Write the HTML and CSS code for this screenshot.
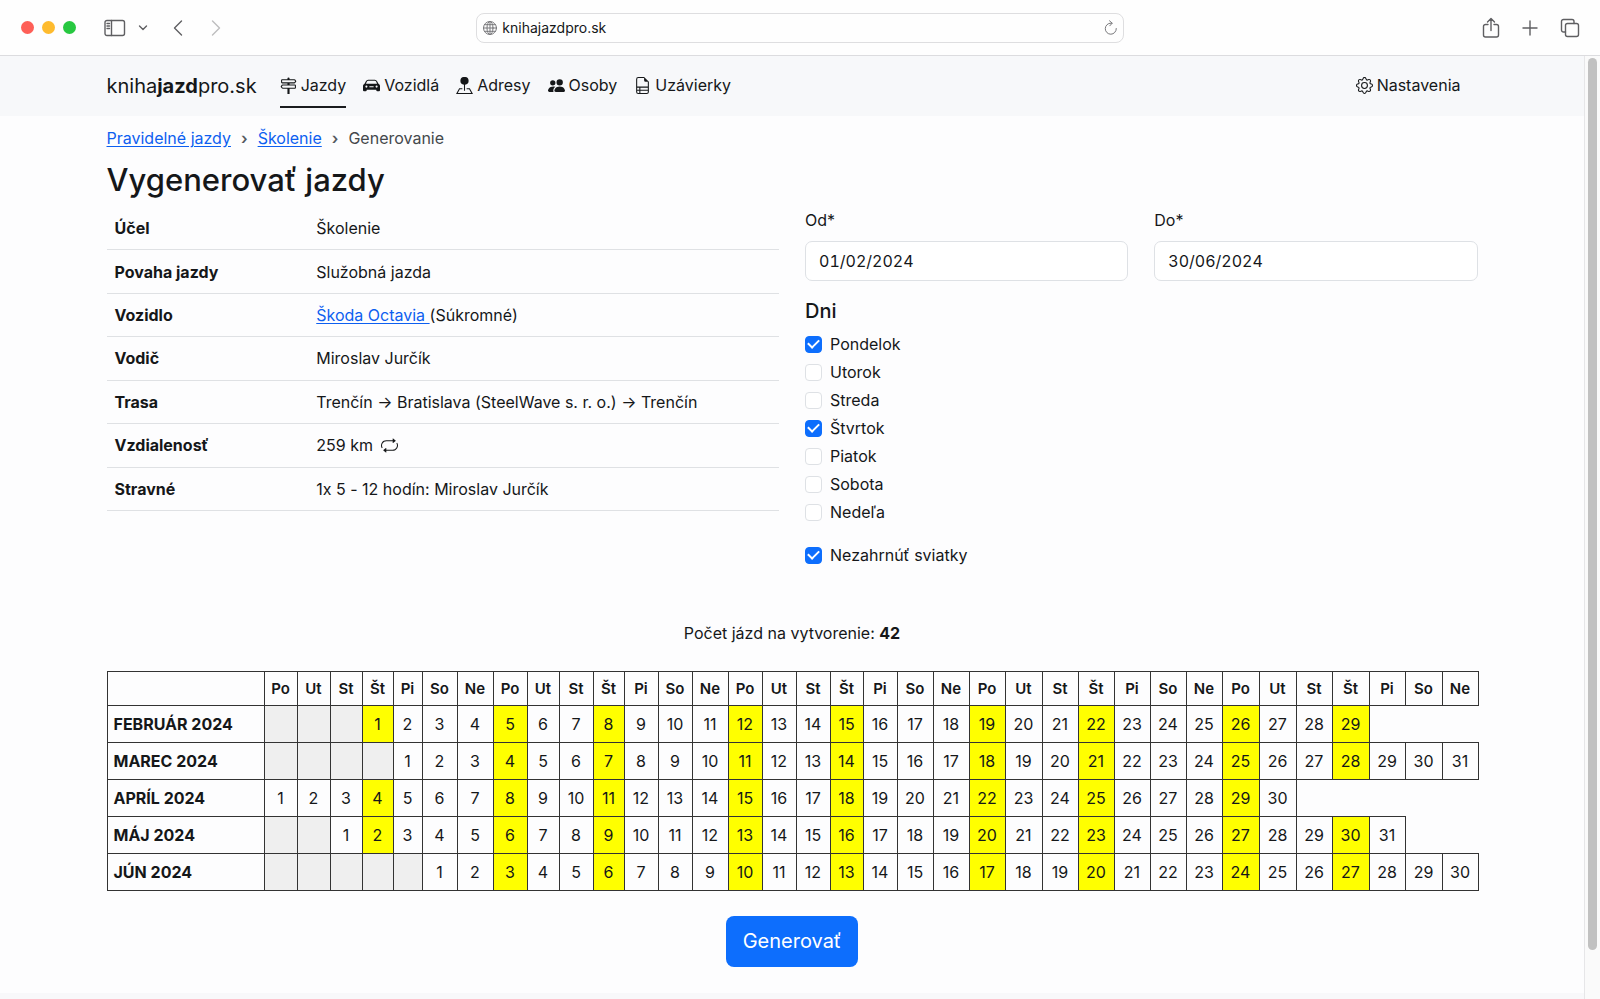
FILE: index.html
```html
<!DOCTYPE html>
<html lang="sk">
<head>
<meta charset="utf-8">
<title>Vygenerovať jazdy</title>
<link rel="stylesheet" href="styles.css">
</head>
<body>
<header class="toolbar">
  <div class="toolbar-side">
    <div class="lights"><span class="light red"></span><span class="light amber"></span><span class="light green"></span></div>
    <button class="tool" aria-label="Bočný panel"><svg width="22" height="18" viewBox="0 0 22 18"><rect x="1" y="1.5" width="19.5" height="15" rx="2" /><path d="M7.500 1.500v15M3 4.500h2.500M3 7h2.500M3 9.500h2.500"/></svg></button>
    <button class="tool chevron" aria-label="Skupiny kariet"><svg width="10" height="8" viewBox="0 0 10 8"><path d="M1.500 2l3.500 3.500L8.500 2"/></svg></button>
    <button class="tool back" aria-label="Späť"><svg width="12" height="18" viewBox="0 0 12 18"><path d="M9.500 2L2.500 9l7 7"/></svg></button>
    <button class="tool forward" aria-label="Dopredu" disabled><svg width="12" height="18" viewBox="0 0 12 18"><path d="M2.500 2l7 7-7 7"/></svg></button>
  </div>
  <div class="address">
    <svg width="16" height="16" viewBox="0 0 16 16"><circle cx="8" cy="8" r="6.500"/><ellipse cx="8" cy="8" rx="3" ry="6.500"/><path d="M8 1.500v13M1.500 8h13M2.500 4.700h11M2.500 11.300h11"/></svg>
    <input type="text" aria-label="Adresa" value="knihajazdpro.sk">
    <button class="tool" aria-label="Obnoviť"><svg width="14" height="16" viewBox="0 0 14 16"><path d="M12.300 8.500A5.500 5.500 0 1 1 7 3.200h1M5.500 .8L8.200 3.200 5.800 5.800"/></svg></button>
  </div>
  <div class="toolbar-side end">
    <button class="tool" aria-label="Zdieľať"><svg width="18" height="22" viewBox="0 0 18 22"><path d="M6 7.500H3.500a2 2 0 0 0-2 2V18a2 2 0 0 0 2 2h11a2 2 0 0 0 2-2V9.500a2 2 0 0 0-2-2H12M9 13.500V2M5.500 5L9 1.500 12.500 5"/></svg></button>
    <button class="tool" aria-label="Nová karta"><svg width="16" height="16" viewBox="0 0 16 16"><path d="M8 1v14M1 8h14"/></svg></button>
    <button class="tool" aria-label="Prehľad kariet"><svg width="20" height="20" viewBox="0 0 20 20"><path d="M5.500 14H3.500a2 2 0 0 1-2-2V3.500a2 2 0 0 1 2-2H12a2 2 0 0 1 2 2v2"/><rect x="5.500" y="5.500" width="13" height="13" rx="2"/></svg></button>
  </div>
</header>
<div class="viewport">
  <div class="page">
    <nav class="navbar">
      <div class="container nav-row">
        <a class="brand" href="#">kniha<b>jazd</b>pro.sk</a>
        <a class="nav-link active" href="#"><svg class="icon" viewBox="0 0 16 16"><path d="M7 1.414V2H2a1 1 0 0 0-1 1v2a1 1 0 0 0 1 1h5v1H2.500a1 1 0 0 0-.8.4L.725 8.700a.5.5 0 0 0 0 .6l.975 1.300a1 1 0 0 0 .8.4H7v5h2v-5h5a1 1 0 0 0 1-1V8a1 1 0 0 0-1-1H9V6h4.500a1 1 0 0 0 .8-.4l.975-1.300a.5.5 0 0 0 0-.6L14.300 2.400a1 1 0 0 0-.8-.4H9v-.586a1 1 0 0 0-2 0M13.500 3l.75 1-.75 1H2V3zm.5 5v2H2.500l-.75-1 .75-1z"/></svg>Jazdy</a>
        <a class="nav-link" href="#"><svg class="icon" viewBox="0 0 16 16"><path fill-rule="evenodd" d="M4.900 2.500A2.500 2.500 0 0 0 2.700 3.900L1.600 6.100.8 6.800A2 2 0 0 0 0 8.300V12.500a1 1 0 0 0 1 1h1.500a1 1 0 0 0 1-1V12h9v.5a1 1 0 0 0 1 1H15a1 1 0 0 0 1-1V8.300a2 2 0 0 0-.8-1.500l-.8-.7-1.100-2.200A2.500 2.500 0 0 0 11.100 2.500zM4.900 3.500h6.200a1.300 1.300 0 0 1 1.200.8l.9 2.100H2.800l.9-2.100a1.300 1.300 0 0 1 1.200-.8M3.200 8a1 1 0 1 1 0 2 1 1 0 0 1 0-2m9.600 0a1 1 0 1 1 0 2 1 1 0 0 1 0-2M6 8.600h4v1H6z"/></svg>Vozidlá</a>
        <a class="nav-link" href="#"><svg class="icon" viewBox="0 0 16 16"><path fill-rule="evenodd" d="M8 0a3.600 3.600 0 0 1 .5 7.200V13h-1V7.200A3.600 3.600 0 0 1 8 0M3 10.500h3v1H3.600L1.700 15h12.600l-1.900-3.500H10v-1h3L16 16H0z"/></svg>Adresy</a>
        <a class="nav-link" href="#"><svg class="icon" viewBox="0 0 16 16"><path d="M7 14s-1 0-1-1 1-4 5-4 5 3 5 4-1 1-1 1zm4-6a3 3 0 1 0 0-6 3 3 0 0 0 0 6m-5.784 6A2.240 2.240 0 0 1 5 13c0-1.355.68-2.750 1.936-3.720A6.300 6.300 0 0 0 5 9c-4 0-5 3-5 4s1 1 1 1zM4.500 8a2.500 2.500 0 1 0 0-5 2.500 2.500 0 0 0 0 5"/></svg>Osoby</a>
        <a class="nav-link" href="#"><svg class="icon" viewBox="0 0 16 16"><path d="M14 14V4.500L9.500 0H4a2 2 0 0 0-2 2v12a2 2 0 0 0 2 2h8a2 2 0 0 0 2-2M9.500 3A1.500 1.500 0 0 0 11 4.500h2V9H3V2a1 1 0 0 1 1-1h5.500zM3 12v-2h2v2zm0 1h2v2H4a1 1 0 0 1-1-1zm3 2v-2h7v1a1 1 0 0 1-1 1zm7-3H6v-2h7z"/></svg>Uzávierky</a>
        <a class="nav-link settings" href="#"><svg class="icon" viewBox="0 0 16 16"><path d="M8 4.754a3.246 3.246 0 1 0 0 6.492 3.246 3.246 0 0 0 0-6.492M5.754 8a2.246 2.246 0 1 1 4.492 0 2.246 2.246 0 0 1-4.492 0"/><path d="M9.796 1.343c-.527-1.790-3.065-1.790-3.592 0l-.094.319a.873.873 0 0 1-1.255.52l-.292-.16c-1.640-.892-3.433.902-2.540 2.541l.159.292a.873.873 0 0 1-.52 1.255l-.319.094c-1.790.527-1.790 3.065 0 3.592l.319.094a.873.873 0 0 1 .52 1.255l-.16.292c-.892 1.640.901 3.434 2.541 2.540l.292-.159a.873.873 0 0 1 1.255.52l.094.319c.527 1.790 3.065 1.790 3.592 0l.094-.319a.873.873 0 0 1 1.255-.52l.292.16c1.640.893 3.434-.902 2.540-2.541l-.159-.292a.873.873 0 0 1 .52-1.255l.319-.094c1.790-.527 1.790-3.065 0-3.592l-.319-.094a.873.873 0 0 1-.52-1.255l.16-.292c.893-1.640-.902-3.433-2.541-2.540l-.292.159a.873.873 0 0 1-1.255-.52zm-2.633.283c.246-.835 1.428-.835 1.674 0l.094.319a1.873 1.873 0 0 0 2.693 1.115l.291-.16c.764-.415 1.600.42 1.184 1.185l-.159.292a1.873 1.873 0 0 0 1.116 2.692l.318.094c.835.246.835 1.428 0 1.674l-.319.094a1.873 1.873 0 0 0-1.115 2.693l.16.291c.415.764-.42 1.600-1.185 1.184l-.291-.159a1.873 1.873 0 0 0-2.693 1.116l-.094.318c-.246.835-1.428.835-1.674 0l-.094-.319a1.873 1.873 0 0 0-2.692-1.115l-.292.16c-.764.415-1.600-.42-1.184-1.185l.159-.291A1.873 1.873 0 0 0 1.945 8.930l-.319-.094c-.835-.246-.835-1.428 0-1.674l.319-.094A1.873 1.873 0 0 0 3.060 4.377l-.16-.292c-.415-.764.42-1.600 1.185-1.184l.292.159a1.873 1.873 0 0 0 2.692-1.115z"/></svg>Nastavenia</a>
      </div>
    </nav>
    <main class="container">
      <nav class="breadcrumb" aria-label="Navigácia">
        <a href="#">Pravidelné jazdy</a><span class="sep">›</span><a href="#">Školenie</a><span class="sep">›</span><span class="current">Generovanie</span>
      </nav>
      <h1>Vygenerovať jazdy</h1>
      <form>
        <div class="columns">
          <table class="details">
            <tbody>
              <tr><th scope="row">Účel</th><td>Školenie</td></tr>
              <tr><th scope="row">Povaha jazdy</th><td>Služobná jazda</td></tr>
              <tr><th scope="row">Vozidlo</th><td><a href="#">Škoda Octavia </a>(Súkromné)</td></tr>
              <tr><th scope="row">Vodič</th><td>Miroslav Jurčík</td></tr>
              <tr><th scope="row">Trasa</th><td>Trenčín → Bratislava (SteelWave s. r. o.) → Trenčín</td></tr>
              <tr><th scope="row">Vzdialenosť</th><td>259 km <svg class="icon repeat" viewBox="0 0 16 16"><path d="M11 5.466V4H5a4 4 0 0 0-3.584 5.777.5.5 0 1 1-.896.446A5 5 0 0 1 5 3h6V1.534a.25.25 0 0 1 .41-.192l2.360 1.966c.12.100.12.284 0 .384l-2.360 1.966a.25.25 0 0 1-.41-.192m3.810.086a.5.5 0 0 1 .67.225A5 5 0 0 1 11 13H5v1.466a.25.25 0 0 1-.41.192l-2.360-1.966a.25.25 0 0 1 0-.384l2.360-1.966a.25.25 0 0 1 .41.192V12h6a4 4 0 0 0 3.585-5.777.5.5 0 0 1 .225-.67z"/></svg></td></tr>
              <tr><th scope="row">Stravné</th><td>1x 5 - 12 hodín: Miroslav Jurčík</td></tr>
            </tbody>
          </table>
          <div class="options">
            <div class="dates">
              <div class="field"><label for="from">Od*</label><input id="from" type="text" value="01/02/2024"></div>
              <div class="field"><label for="to">Do*</label><input id="to" type="text" value="30/06/2024"></div>
            </div>
            <h2>Dni</h2>
            <div class="days">
              <label class="check"><input type="checkbox" checked>Pondelok</label>
              <label class="check"><input type="checkbox">Utorok</label>
              <label class="check"><input type="checkbox">Streda</label>
              <label class="check"><input type="checkbox" checked>Štvrtok</label>
              <label class="check"><input type="checkbox">Piatok</label>
              <label class="check"><input type="checkbox">Sobota</label>
              <label class="check"><input type="checkbox">Nedeľa</label>
            </div>
            <label class="check"><input type="checkbox" checked>Nezahrnúť sviatky</label>
          </div>
        </div>
        <p class="count">Počet jázd na vytvorenie: <b>42</b></p>
        <table class="calendar" id="calendar"></table>
        <button class="submit" type="submit">Generovať</button>
      </form>
    </main>
  </div>
  <div class="scrollbar"><div class="thumb"></div></div>
</div>
<script src="calendar.js"></script>
</body>
</html>
```
FILE: calendar.js
```js
const DAY_NAMES = ["Po", "Ut", "St", "Št", "Pi", "So", "Ne"];
const COLUMN_WIDTHS = [157, 33, 33, 32, 31, 29, 35, 36, 34, 32, 34, 31, 34, 34, 36, 34, 34, 34,
  33, 34, 36, 36, 36, 37, 36, 36, 36, 36, 36, 37, 37, 36, 37, 36, 37, 36];
// offset = empty cells before the 1st; skip = public holidays
const MONTHS = [
  { name: "FEBRUÁR 2024", offset: 3, days: 29, skip: [] },
  { name: "MAREC 2024", offset: 4, days: 31, skip: [] },
  { name: "APRÍL 2024", offset: 0, days: 30, skip: [1] },
  { name: "MÁJ 2024", offset: 2, days: 31, skip: [] },
  { name: "JÚN 2024", offset: 5, days: 30, skip: [] }
];
const PICKED = [0, 3];

const cols = COLUMN_WIDTHS.map(w => `<col style="width:${w}px">`).join("");
let head = "<td></td>";
for (let i = 0; i < 35; i++) head += `<th scope="col">${DAY_NAMES[i % 7]}</th>`;
const rows = MONTHS.map(m => {
  let cells = `<th scope="row">${m.name}</th>`;
  for (let i = 0; i < m.offset; i++) cells += '<td class="empty"></td>';
  for (let d = 1; d <= m.days; d++) {
    const on = PICKED.includes((m.offset + d - 1) % 7) && !m.skip.includes(d);
    cells += `<td${on ? ' class="on"' : ""}>${d}</td>`;
  }
  return `<tr>${cells}</tr>`;
}).join("");
document.getElementById("calendar").innerHTML =
  `<colgroup>${cols}</colgroup><thead><tr>${head}</tr></thead><tbody>${rows}</tbody>`;
```
FILE: styles.css
```css
* { box-sizing: border-box; }
body {
  margin: 0;
  min-height: 100vh;
  display: flex;
  flex-direction: column;
  font: 16px/26px Inter, "Liberation Sans", sans-serif;
  color: #151719;
  background: #fdfdfe;
}
a { color: #0d5ff0; text-underline-offset: 2px; }
button, input { font: inherit; color: inherit; }

.toolbar {
  display: flex;
  align-items: center;
  height: 56px;
  padding: 0 20px;
  background: #fefefe;
  border-bottom: 1px solid #dcdcdf;
}
.toolbar-side { flex: 1; display: flex; align-items: center; }
.toolbar-side.end { justify-content: flex-end; gap: 22px; }
.lights { display: flex; gap: 8px; padding-left: 1px; margin-right: 28px; }
.light { width: 13px; height: 13px; border-radius: 50%; }
.red { background: #fe5f57; }
.amber { background: #febb2e; }
.green { background: #27c840; }
.tool { display: flex; padding: 0; border: 0; background: none; }
.toolbar svg { fill: none; stroke: #5f5f62; stroke-width: 1.4; stroke-linecap: round; stroke-linejoin: round; }
.chevron { margin-left: 12px; }
.back { margin-left: 24px; }
.forward { margin-left: 26px; opacity: .4; }
.address {
  display: flex;
  align-items: center;
  gap: 4px;
  width: 41.5%;
  height: 30px;
  padding: 0 5px;
  border: 1px solid #dedee0;
  border-radius: 8px;
}
.address svg { stroke: #79797c; stroke-width: 1; }
.address input { flex: 1; border: 0; padding: 0; background: none; font-size: 14px; outline: 0; }

.viewport { flex: 1; display: flex; }
.page { flex: 1; border-bottom: 6px solid #f8f8fa; }
.scrollbar { width: 16px; padding: 2px 3px; border-left: 1px solid #e6e6e8; background: #fafafa; }
.thumb { width: 9px; height: 95%; border-radius: 5px; background: #c1c1c1; }

.container { width: 100%; max-width: 1371px; margin: 0 auto; }
.navbar { background: #f7f8fa; }
.nav-row { display: flex; align-items: center; gap: 17px; height: 60px; padding-right: 17px; }
.brand { font-size: 20px; color: inherit; text-decoration: none; margin-right: 6px; }
.nav-link {
  display: flex;
  align-items: center;
  gap: 4px;
  padding: 8px 0;
  color: inherit;
  text-decoration: none;
  border-bottom: 2px solid transparent;
}
.nav-link.active { border-color: #1a1c1e; }
.settings { margin-left: auto; }
.icon { width: 17px; height: 17px; fill: currentColor; }
.repeat { vertical-align: -3px; margin-left: 4px; }

.breadcrumb { display: flex; padding-top: 9px; }
.sep { padding: 0 10px; font-weight: 600; color: #555a5f; }
.current { color: #44484c; }
h1 { margin: 8px 0 6px; font-size: 31px; line-height: 42px; font-weight: 500; }

.columns { display: grid; grid-template-columns: 1fr 1fr; gap: 26px; align-items: start; }
.details { width: 100%; height: 304px; border-collapse: collapse; font-feature-settings: "calt" 0; }
.details th, .details td { padding: 8px; border-bottom: 1px solid #dfe1e4; text-align: left; }
.details th { width: 30%; font-weight: 700; }

.dates { display: grid; grid-template-columns: 1fr 1fr; gap: 26px; }
.field { display: flex; flex-direction: column; gap: 8px; }
.field input {
  width: 100%;
  height: 40px;
  padding: 0 13px;
  border: 1px solid #dee1e5;
  border-radius: 7px;
  background: #fff;
  font-variant-numeric: tabular-nums;
}
h2 { margin: 17px 0 6px; font-size: 20px; line-height: 26px; font-weight: 500; }
.days { margin-bottom: 15px; }
.check { display: flex; align-items: center; gap: 8px; line-height: 28px; }
.check input {
  appearance: none;
  width: 17px;
  height: 17px;
  margin: 0;
  display: grid;
  place-items: center;
  border: 1px solid #dee1e5;
  border-radius: 4px;
  background: #fff;
}
.check input:checked { background: #0d6efd; border-color: #0d6efd; }
.check input:checked::after {
  content: "";
  width: 9px;
  height: 5px;
  margin-bottom: 3px;
  border: solid #fff;
  border-width: 0 0 2px 2px;
  transform: rotate(-45deg);
}

.count { margin: 51px 0 25px; text-align: center; }
.calendar { width: 100%; table-layout: fixed; border-collapse: collapse; text-align: center; }
.calendar th, .calendar td { height: 37px; padding: 0; border: 1px solid #333; }
.calendar thead th, .calendar thead td { height: 34px; font-size: 15px; font-weight: 600; }
.calendar tbody th { padding-left: 6px; text-align: left; font-weight: 700; }
.calendar .empty { background: #efefef; }
.calendar .on { background: #ff0; }
.submit {
  display: block;
  margin: 25px auto;
  padding: 12px 17px;
  border: 0;
  border-radius: 8px;
  background: #0d6efd;
  color: #fff;
  font-size: 20px;
  line-height: 27px;
}
```
